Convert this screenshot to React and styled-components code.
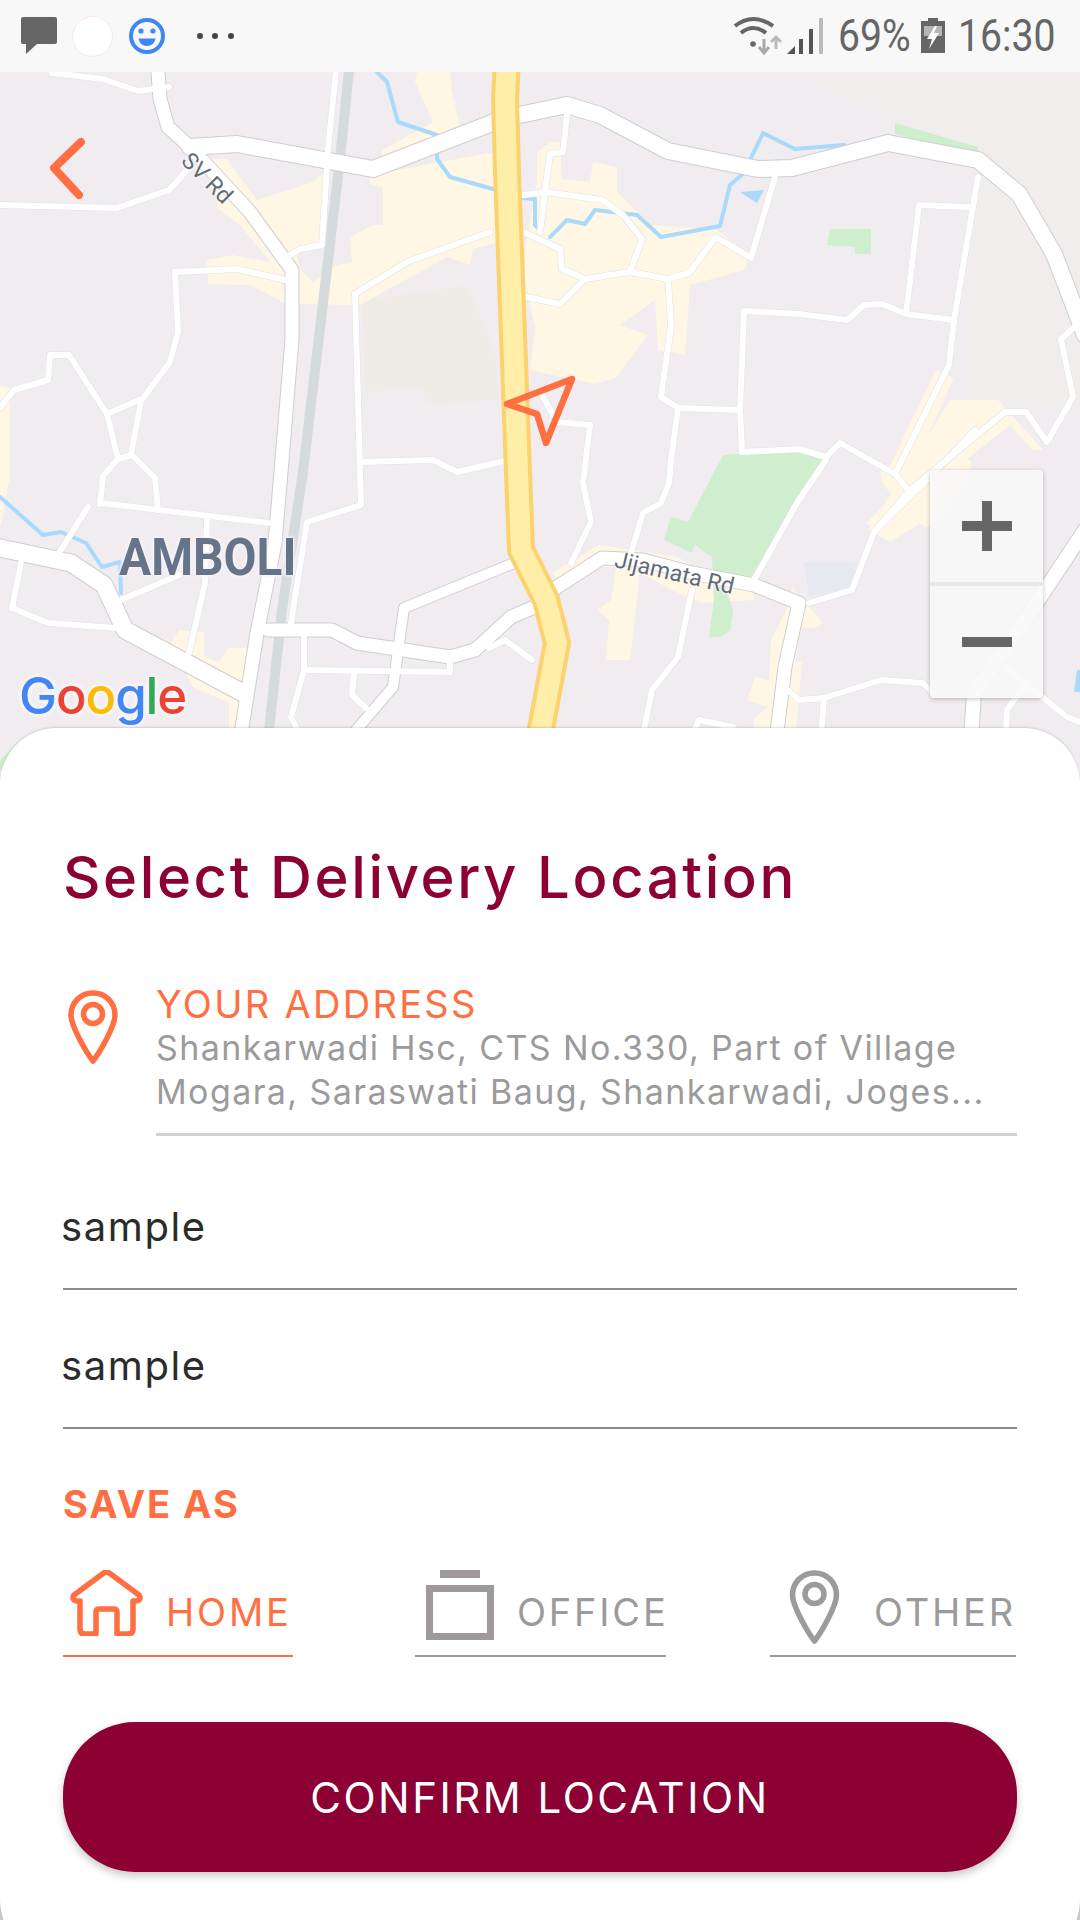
import styled, { createGlobalStyle } from "styled-components";

const ORANGE = "#ff6f41";
const GREY = "#9b9b9b";
const WINE = "#8c0033";
const SANS = `"Inter", "Noto Sans", sans-serif`;

const GlobalStyle = createGlobalStyle`
  html, body {
    margin: 0;
    padding: 0;
    background: #fff;
  }
  * {
    box-sizing: border-box;
  }
`;

// map data, page pixel coordinates
const wideRoads = [
  { d: "M190,147 237,144 373,169 505,118 567,105 600,115 668,151 758,169 792,168 888,143 978,160 1019,194 1054,254 1085,335", w: 16 },
  { d: "M157,60 160,99 168,127 190,147 250,212 292,270 292,339 282,460 275,543 257,633 240,740", w: 13 },
  { d: "M-5,547 71,563 104,585 125,630 243,693", w: 17 },
  { d: "M268,630 332,630 357,643 450,657 475,650 511,617 539,605 557,587 602,558 643,560 692,573 754,585 799,603 785,667 776,740", w: 13 },
  { d: "M514,563 404,608 393,687 352,735", w: 10 },
  { d: "M1085,530 1023,623 974,693 971,740", w: 14 },
];

const thinRoads = [
  "M337,60 328,149 322,245 300,249 290,255",
  "M0,205 117,208 169,190 190,167",
  "M52,73 103,79 138,91 169,87",
  "M175,272 237,269 285,280",
  "M175,272 178,332 170,362 141,401 131,455",
  "M0,408 14,390 48,380 50,355 69,355 107,414 141,399",
  "M107,414 118,459 132,455 155,478 158,510",
  "M118,459 103,476 100,504",
  "M355,294 407,262 490,232",
  "M355,294 360,472 361,505 307,522 291,623",
  "M360,462 433,460 457,472 505,461",
  "M567,115 563,152 550,154 545,192 540,232",
  "M523,195 545,192 602,200 623,215 642,239 630,272",
  "M523,232 560,249 562,269 585,279 630,272 668,279 689,273 716,237 751,258 775,177",
  "M585,279 560,304 527,297",
  "M542,395 557,422 590,425 583,483 591,522 571,563",
  "M668,279 671,326 661,397 678,408 740,410 744,311 799,314 847,320 864,305 882,304 906,314 954,320",
  "M740,410 742,452 799,449 826,457 840,443 895,474 909,491 874,532",
  "M906,314 919,205 968,207",
  "M978,177 954,320 949,365 895,474",
  "M678,408 671,460 669,483 661,503 643,513 631,553",
  "M909,491 1005,412 1026,412 1047,442 1073,397 1061,339 1080,322",
  "M100,503 268,523",
  "M88,507 59,553",
  "M207,520 205,583 189,653",
  "M21,563 12,608 48,623 116,628",
  "M121,600 179,575",
  "M304,670 450,672 450,660",
  "M304,637 304,670 291,717 300,735",
  "M354,673 352,695 366,708",
  "M489,648 505,640 532,660",
  "M826,460 797,503 754,580",
  "M692,590 678,657 652,690 643,735",
  "M809,603 852,590 874,532 930,477 975,430",
  "M788,690 799,700 824,698 881,680 923,683 933,693",
  "M824,698 821,735",
  "M699,720 692,735",
  "M699,720 733,727",
  "M1006,668 1067,717 1085,724",
  "M1026,683 1007,710 1006,735",
];

const builtUp = [
  "M210,159 227,159 257,200 313,182 325,172 330,175 322,245 295,249 300,269 313,282 337,265 352,262 350,237 373,225 383,225 383,187 370,185 370,175 505,150 507,240 473,249 470,265 447,257 360,305 300,304 280,302 285,280 240,225 218,209Z",
  "M417,72 450,72 452,92 460,125 380,160 382,150 433,122 415,82Z",
  "M207,260 233,255 280,264 283,302 250,285 208,284Z",
  "M525,250 537,182 537,152 550,142 560,142 562,179 590,182 593,162 617,167 617,192 650,225 717,230 750,255 745,270 690,285 685,355 658,350 655,300 620,325 648,335 616,378 595,384 530,370 535,330 525,280Z",
  "M552,573 599,545 678,557 702,573 754,578 754,600 702,603 678,593 640,573 630,660 606,660 609,620 597,610 611,600 616,567 602,567 564,590Z",
  "M792,587 823,623 816,628 802,627 795,660 802,663 795,740 754,740 754,718 768,707 747,700 755,677 769,680 771,640 788,607Z",
  "M881,470 905,460 971,460 971,470 943,513 926,528 911,517 888,540 866,523 892,497 881,480Z",
  "M179,630 204,632 204,657 218,662 229,648 250,648 246,740 229,740 229,703 193,687 171,643Z",
  "M936,370 954,378 909,476 885,476Z",
  "M868,530 950,400 998,400 1043,450 1033,450 1010,425 960,465 926,520 890,542Z",
  "M0,386 10,388 10,476 0,528Z",
];

const parks = [
  "M723,455 800,449 825,457 754,580 723,578 733,610 730,630 721,637 709,637 714,600 712,557 695,545 692,553 664,540 671,517 688,522Z",
  "M830,229 871,229 871,254 855,254 855,247 827,245Z",
  "M895,123 978,147 978,156 895,134Z",
  "M0,760 18,742 40,742 40,770 0,770Z",
];

const rivers = [
  "M377,72 387,82 398,122 437,135 437,159 450,177 493,189",
  "M523,198 535,199 535,225 540,230",
  "M550,237 567,220 585,224 595,210 637,215 661,237 720,226 730,185 744,173 763,133 795,149 844,145",
  "M0,497 43,535 61,532 86,543 102,567 120,562 121,593",
];

const highway = "M507,60 505,99 507,172 518,472 521,550 546,600 557,643 538,745";

const logoLetters = [
  ["G", "#4285f4"],
  ["o", "#ea4335"],
  ["o", "#fbbc05"],
  ["g", "#4285f4"],
  ["l", "#34a853"],
  ["e", "#ea4335"],
];

function MapDrawing() {
  return (
    <MapSvg viewBox="0 72 1080 720">
      <path d="M362,300 467,285 495,350 499,400 427,404 420,388 365,392Z" fill="#efece8" />
      <path d="M785,72 1080,72 1080,405 965,405 978,160 895,118Z" fill="#f0edec" />
      {builtUp.map((d) => (
        <path key={d} d={d} fill="#fff6e3" />
      ))}
      {parks.map((d) => (
        <path key={d} d={d} fill="#cfeecd" />
      ))}
      {rivers.map((d) => (
        <MapLine key={d} d={d} stroke="#a9d9fb" strokeWidth="4" />
      ))}
      <path d="M740,192 764,190 757,203Z" fill="#a9d9fb" />
      <path d="M1077,670 1080,670 1080,692 1074,692Z" fill="#a9d9fb" />
      <path d="M804,562 857,563 850,587 809,597Z" fill="#e6e9ee" />
      <MapLine d="M350,60 340,159 303,472 282,610 268,740" stroke="#d5dbdc" strokeWidth="10" />
      {thinRoads.map((d) => (
        <MapLine key={d} d={d} stroke="#e3e0e3" strokeWidth="7" />
      ))}
      {wideRoads.map((r) => (
        <MapLine key={r.d} d={r.d} stroke="#cfcdd1" strokeWidth={r.w + 2} />
      ))}
      {thinRoads.map((d) => (
        <MapLine key={d} d={d} stroke="#ffffff" strokeWidth="6" />
      ))}
      {wideRoads.map((r) => (
        <MapLine key={r.d} d={r.d} stroke="#ffffff" strokeWidth={r.w} />
      ))}
      <MapLine d={highway} stroke="#fbd26e" strokeWidth="28" />
      <MapLine d={highway} stroke="#feeea8" strokeWidth="20" />
      <MapLine d="M81,142 54,168 79,195" stroke={ORANGE} strokeWidth="8" />
      <MapLine d="M572,379 507,404 537,414 546,443Z" stroke={ORANGE} strokeWidth="6.5" />
    </MapSvg>
  );
}

function PinIcon({ color, width, height }) {
  return (
    <svg width={width} height={height} viewBox="0 0 50 74" fill="none" stroke={color} strokeWidth="5.5">
      <path d="M25 3 C12 3 3 13 3 25 C3 36 18 62 25 71 C32 62 47 36 47 25 C47 13 38 3 25 3Z" strokeLinejoin="round" />
      <circle cx="25" cy="24" r="9.5" />
    </svg>
  );
}

function HomeIcon() {
  return (
    <svg width="73" height="66" viewBox="0 0 73 66" fill="none" stroke={ORANGE} strokeWidth="5.5" strokeLinejoin="round">
      <path d="M33 3.5 Q36.5 1 40 3.5 L69 25 Q72 30 66 31 L63 31 L63 59 Q63 64 58 64 L47 64 L47 42 Q47 39 44 39 L29 39 Q26 39 26 42 L26 64 L15 64 Q10 64 10 59 L10 31 L7 31 Q1 30 4 25 Z" />
    </svg>
  );
}

function OfficeIcon() {
  return (
    <svg width="68" height="70" viewBox="0 0 68 70" fill="none">
      <rect x="14" y="0" width="40" height="8" fill="#9f9a99" />
      <rect x="3.5" y="18.5" width="61" height="48" stroke="#9f9a99" strokeWidth="7" />
    </svg>
  );
}

function BubbleIcon() {
  return (
    <svg width="36" height="38" viewBox="0 0 36 38">
      <path d="M2 0 H34 Q36 0 36 2 V25 Q36 27 34 27 H16 L5 37 V27 H2 Q0 27 0 25 V2 Q0 0 2 0Z" fill="#666" />
    </svg>
  );
}

function SmileyIcon() {
  return (
    <svg width="38" height="40" viewBox="0 0 38 40">
      <circle cx="19" cy="20" r="16" fill="none" stroke="#3f87f5" strokeWidth="4" />
      <circle cx="13" cy="15" r="2.6" fill="#3f87f5" />
      <circle cx="25" cy="15" r="2.6" fill="#3f87f5" />
      <path d="M10.5 22.5 H27.5 Q26 30 19 30 Q12 30 10.5 22.5Z" fill="#3f87f5" />
    </svg>
  );
}

function DotsIcon() {
  return (
    <svg width="59" height="8" viewBox="0 0 59 8" fill="#444">
      <circle cx="19" cy="4" r="3" />
      <circle cx="34" cy="4" r="3" />
      <circle cx="50" cy="4" r="3" />
    </svg>
  );
}

function NetworkIcon() {
  return (
    <svg width="92" height="40" viewBox="733 15 92 40" fill="none">
      <path d="M735 25 Q753 11 773 25" stroke="#666" strokeWidth="4" />
      <path d="M741 32 Q753 22 766 32" stroke="#666" strokeWidth="4" />
      <circle cx="753" cy="43" r="2.8" fill="#666" />
      <path d="M764 38 V50 M759 46 L764 52 L769 46" stroke="#aaa" strokeWidth="3" />
      <path d="M776 48 V37 M771 41 L776 36 L781 41" stroke="#bbb" strokeWidth="3" />
      <path d="M787 53 L795 53 L795 45Z" fill="#555" />
      <rect x="799" y="38" width="4" height="15" fill="#555" />
      <rect x="809" y="28" width="4" height="25" fill="#555" />
      <rect x="819" y="17" width="4" height="36" fill="#bbb" />
    </svg>
  );
}

function BatteryIcon() {
  return (
    <svg width="24" height="36" viewBox="0 0 24 36">
      <path d="M7 0 H17 V3 H24 V35 H0 V3 H7Z" fill="#666" />
      <rect x="3" y="8" width="18" height="10" fill="#b5b5b5" />
      <path d="M14 8 L6 21 H11 L8 31 L18 15 H13 L16 8Z" fill="#fff" />
    </svg>
  );
}

function PlusIcon() {
  return (
    <svg width="50" height="50" viewBox="0 0 50 50" fill="#666">
      <rect x="20" y="0" width="10" height="50" />
      <rect x="0" y="20" width="50" height="10" />
    </svg>
  );
}

function MinusIcon() {
  return (
    <svg width="50" height="10" viewBox="0 0 50 10" fill="#666">
      <rect x="0" y="0" width="50" height="10" />
    </svg>
  );
}

export default function App() {
  return (
    <>
      <GlobalStyle />
      <Page>
        <StatusBar>
          <StatusGroup $gap={15}>
            <BubbleIcon />
            <NotificationDot />
            <SmileyIcon />
            <DotsIcon />
          </StatusGroup>
          <StatusGroup $gap={13}>
            <NetworkIcon />
            <StatusText $width={70}>69%</StatusText>
            <BatteryIcon />
            <StatusText $width={97}>16:30</StatusText>
          </StatusGroup>
        </StatusBar>

        <MapArea>
          <MapDrawing />
          <RoadLabel $left={185} $top={73} $angle={45}>SV Rd</RoadLabel>
          <RoadLabel $left={615} $top={476} $angle={13}>Jijamata Rd</RoadLabel>
          <AreaLabel>AMBOLI</AreaLabel>
          <ZoomControls>
            <ZoomButton><PlusIcon /></ZoomButton>
            <ZoomButton><MinusIcon /></ZoomButton>
          </ZoomControls>
          <GoogleLogo>
            {logoLetters.map(([letter, color], i) => (
              <LogoLetter key={i} $color={color}>{letter}</LogoLetter>
            ))}
          </GoogleLogo>
        </MapArea>

        <Sheet>
          <Title>Select Delivery Location</Title>
          <AddressRow>
            <AddressPin>
              <PinIcon color={ORANGE} width={50} height={74} />
            </AddressPin>
            <AddressBody>
              <AddressLabel>YOUR ADDRESS</AddressLabel>
              <AddressLine>Shankarwadi Hsc, CTS No.330, Part of Village</AddressLine>
              <AddressLine>Mogara, Saraswati Baug, Shankarwadi, Joges...</AddressLine>
            </AddressBody>
          </AddressRow>

          <Field>sample</Field>
          <Field>sample</Field>

          <SaveAs>SAVE AS</SaveAs>
          <Tabs>
            <Tab $active $width={230} $inset={7} $gap={23}>
              <HomeIcon />
              HOME
            </Tab>
            <Tab $width={251} $offset={122} $inset={11} $gap={23}>
              <OfficeIcon />
              OFFICE
            </Tab>
            <Tab $width={246} $offset={104} $inset={19} $gap={34}>
              <PinIcon color={GREY} width={51} height={74} />
              OTHER
            </Tab>
          </Tabs>

          <ConfirmButton>CONFIRM LOCATION</ConfirmButton>
        </Sheet>
      </Page>
    </>
  );
}

const Page = styled.div`
  width: 1080px;
  height: 1920px;
  overflow: hidden;
  background: #c9c9c9;
  font-family: ${SANS};
`;

const StatusBar = styled.header`
  height: 72px;
  padding: 0 25px 0 21px;
  display: flex;
  align-items: center;
  justify-content: space-between;
  background: #f8f8f8;
`;

const StatusGroup = styled.div`
  display: flex;
  align-items: center;
  gap: ${(p) => p.$gap}px;
`;

const NotificationDot = styled.span`
  width: 41px;
  height: 41px;
  border-radius: 50%;
  background: #fff;
  border: 1px solid #fbe6e6;
`;

const StatusText = styled.span`
  width: ${(p) => p.$width}px;
  font-family: "Roboto", sans-serif;
  font-size: 44px;
  line-height: 50px;
  color: #666;
  white-space: nowrap;
  transform: scaleX(0.89);
  transform-origin: left center;
`;

const MapArea = styled.div`
  position: relative;
  height: 720px;
  background: #f0ecf0;
  overflow: hidden;
`;

const MapSvg = styled.svg`
  display: block;
  width: 100%;
  height: 100%;
`;

const MapLine = styled.path`
  fill: none;
  stroke-linejoin: round;
  stroke-linecap: round;
`;

const RoadLabel = styled.span`
  position: absolute;
  left: ${(p) => p.$left}px;
  top: ${(p) => p.$top}px;
  font-family: "Roboto", sans-serif;
  font-size: 23px;
  line-height: 24px;
  color: #5f6b78;
  white-space: nowrap;
  text-shadow: 0 0 3px #fff, 0 0 3px #fff;
  transform: rotate(${(p) => p.$angle}deg);
  transform-origin: left center;
`;

const AreaLabel = styled.span`
  position: absolute;
  left: 119px;
  top: 457px;
  font-family: "Roboto", sans-serif;
  font-weight: 700;
  font-size: 52px;
  line-height: 58px;
  color: #66748a;
  text-shadow: 0 0 4px #f7f5f8, 0 0 4px #f7f5f8, 0 0 4px #f7f5f8;
  transform: scaleX(0.92);
  transform-origin: left center;
`;

const ZoomControls = styled.div`
  position: absolute;
  left: 930px;
  top: 398px;
  width: 113px;
  height: 228px;
  display: flex;
  flex-direction: column;
  background: rgba(248, 248, 248, 0.9);
  border-radius: 4px;
  box-shadow: 0 1px 4px rgba(0, 0, 0, 0.25);
`;

const ZoomButton = styled.div`
  flex: 1;
  display: flex;
  align-items: center;
  justify-content: center;

  & + & {
    border-top: 4px solid #e9e8e9;
  }
`;

const GoogleLogo = styled.div`
  position: absolute;
  left: 19px;
  top: 591px;
  display: flex;
  font-family: "Inter", sans-serif;
  font-size: 51px;
  line-height: 66px;
  font-weight: 500;
  letter-spacing: -1.2px;
  text-shadow: 0 0 5px #f7f5f8, 0 0 5px #f7f5f8, 0 0 5px #f7f5f8, 0 0 5px #f7f5f8, 0 0 5px #f7f5f8;
`;

const LogoLetter = styled.span`
  color: ${(p) => p.$color};
`;

const Sheet = styled.main`
  position: relative;
  margin-top: -64px;
  height: 1228px;
  padding: 109px 63px 0;
  background: #fff;
  border-radius: 56px;
  box-shadow: 0 -1px 2px rgba(0, 0, 0, 0.14);
`;

const Title = styled.h1`
  margin: 0;
  font-size: 58px;
  line-height: 80px;
  font-weight: 500;
  letter-spacing: 2.6px;
  color: ${WINE};
  white-space: nowrap;
`;

const AddressRow = styled.section`
  margin-top: 65px;
  display: flex;
`;

const AddressPin = styled.div`
  width: 93px;
  padding: 8px 0 0 5px;
`;

const AddressBody = styled.div`
  flex: 1;
  padding-bottom: 19px;
  border-bottom: 3px solid #d0d0d0;
`;

const AddressLabel = styled.div`
  font-size: 38px;
  line-height: 44px;
  letter-spacing: 2.3px;
  color: ${ORANGE};
`;

const AddressLine = styled.div`
  font-size: 34px;
  line-height: 44px;
  letter-spacing: 1.4px;
  color: ${GREY};
  white-space: nowrap;
`;

const Field = styled.div`
  height: 139px;
  display: flex;
  align-items: flex-end;
  padding-bottom: 40px;
  font-size: 40px;
  line-height: 42px;
  letter-spacing: 1.6px;
  color: #2b2b2b;
  text-indent: -2px;
  border-bottom: 2px solid #8b8b8b;

  &:first-of-type {
    margin-top: 15px;
  }
`;

const SaveAs = styled.h2`
  margin: 53px 0 0;
  font-size: 38px;
  line-height: 44px;
  font-weight: 700;
  letter-spacing: 2px;
  color: ${ORANGE};
`;

const Tabs = styled.div`
  margin-top: 44px;
  display: flex;
`;

const Tab = styled.div`
  width: ${(p) => p.$width}px;
  height: 87px;
  margin-left: ${(p) => p.$offset || 0}px;
  padding-left: ${(p) => p.$inset}px;
  display: flex;
  align-items: flex-start;
  gap: ${(p) => p.$gap}px;
  font-size: 38px;
  line-height: 84px;
  letter-spacing: 2.8px;
  color: ${(p) => (p.$active ? ORANGE : GREY)};
  border-bottom: 2px solid ${(p) => (p.$active ? ORANGE : GREY)};
  white-space: nowrap;

  svg {
    flex-shrink: 0;
  }
`;

const ConfirmButton = styled.button`
  display: block;
  width: 100%;
  height: 150px;
  margin-top: 65px;
  border: 0;
  border-radius: 72px;
  background: ${WINE};
  color: #fff;
  font-family: ${SANS};
  font-size: 42px;
  font-weight: 400;
  letter-spacing: 2.5px;
  box-shadow: 0 4px 8px rgba(0, 0, 0, 0.22);
`;
